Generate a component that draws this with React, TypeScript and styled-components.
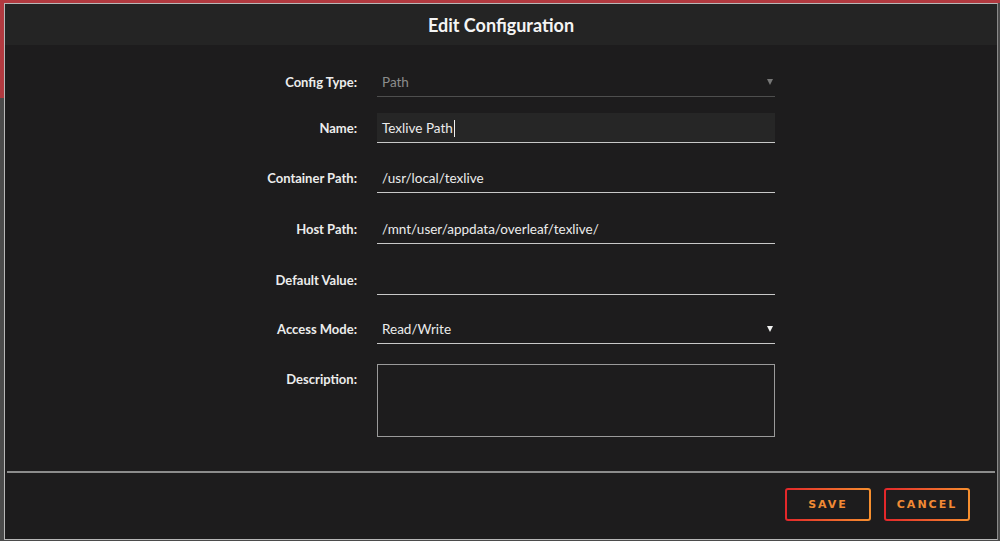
import React from 'react'
import styled, { createGlobalStyle } from 'styled-components'

const GlobalStyle = createGlobalStyle`
  html, body {
    margin: 0;
    padding: 0;
    height: 100%;
  }
  body {
    font-family: Lato, "Open Sans", sans-serif;
    background: #4b4b4b;
  }
  #root {
    height: 100%;
  }
`

type Field = {
  label: string
  kind: 'select' | 'input' | 'textarea'
  value?: string
  disabled?: boolean
  filled?: boolean
  caret?: boolean
  mt: number
}

const fields: Field[] = [
  { label: 'Config Type:', kind: 'select', value: 'Path', disabled: true, mt: 0 },
  { label: 'Name:', kind: 'input', value: 'Texlive Path', filled: true, caret: true, mt: 16 },
  { label: 'Container Path:', kind: 'input', value: '/usr/local/texlive', mt: 20 },
  { label: 'Host Path:', kind: 'input', value: '/mnt/user/appdata/overleaf/texlive/', mt: 21 },
  { label: 'Default Value:', kind: 'input', value: '', mt: 21 },
  { label: 'Access Mode:', kind: 'select', value: 'Read/Write', mt: 19 },
  { label: 'Description:', kind: 'textarea', mt: 20 },
]

export default function App() {
  return (
    <>
      <GlobalStyle />
      <Page>
        <Dialog>
          <Header>Edit Configuration</Header>
          <Body>
            {fields.map((f) => (
              <Row key={f.label} $mt={f.mt}>
                <Label>{f.label}</Label>
                {f.kind === 'textarea' ? (
                  <TextBox />
                ) : (
                  <Control $filled={f.filled} $disabled={f.disabled}>
                    <span>{f.value}</span>
                    {f.caret && <Caret />}
                    {f.kind === 'select' && <Arrow $disabled={f.disabled} />}
                  </Control>
                )}
              </Row>
            ))}
          </Body>
          <Divider />
          <Footer>
            <OutlineButton>SAVE</OutlineButton>
            <OutlineButton>CANCEL</OutlineButton>
          </Footer>
        </Dialog>
      </Page>
    </>
  )
}

const Page = styled.div`
  height: 100%;
  box-sizing: border-box;
  padding: 3px 2px 1px 4px;
  display: flex;
  background:
    linear-gradient(#b23a40, #b23a40) top left / 100% 3px no-repeat,
    linear-gradient(#b23a40, #b23a40) top left / 4px 98px no-repeat,
    #4b4b4b;
`

const Dialog = styled.div`
  flex: 1;
  display: flex;
  flex-direction: column;
  background: #1d1c1d;
  border: 1px solid #b8b8b8;
  border-right-color: #8a8a8a;
`

const Header = styled.div`
  height: 41px;
  display: flex;
  align-items: center;
  justify-content: center;
  background: #242424;
  color: #f4f4f4;
  font-size: 18px;
  font-weight: 700;
`

const Body = styled.div`
  flex: 1;
  padding-top: 22px;
  display: flex;
  flex-direction: column;
`

const Row = styled.div<{ $mt: number }>`
  display: grid;
  grid-template-columns: 352px 398px;
  column-gap: 20px;
  align-items: start;
  margin-top: ${(p) => p.$mt}px;
`

const Label = styled.div`
  text-align: right;
  line-height: 30px;
  height: 30px;
  font-size: 13px;
  font-weight: 700;
  color: #ececec;
`

const Control = styled.div<{ $filled?: boolean; $disabled?: boolean }>`
  position: relative;
  height: 30px;
  box-sizing: border-box;
  display: flex;
  align-items: center;
  padding: 1px 5px 0;
  font-size: 13.5px;
  color: ${(p) => (p.$disabled ? '#8c8c8c' : '#ececec')};
  background: ${(p) => (p.$filled ? '#262626' : 'transparent')};
  border-bottom: 1px solid ${(p) => (p.$disabled ? '#4e4e4e' : '#c8c8c8')};
`

const Caret = styled.span`
  width: 1px;
  height: 17px;
  margin-left: 1px;
  background: #f0f0f0;
`

const Arrow = styled.span<{ $disabled?: boolean }>`
  position: absolute;
  right: 2px;
  top: 12px;
  width: 0;
  height: 0;
  border-left: 3px solid transparent;
  border-right: 3px solid transparent;
  border-top: 6px solid ${(p) => (p.$disabled ? '#777' : '#f0f0f0')};
`

const TextBox = styled.div`
  height: 73px;
  box-sizing: border-box;
  border: 1px solid #9a9a9a;
`

const Divider = styled.div`
  height: 2px;
  margin: 0 2px;
  background: #8c8c8c;
`

const Footer = styled.div`
  display: flex;
  justify-content: flex-end;
  gap: 13px;
  padding: 15px 27px 18px 0;
`

const OutlineButton = styled.button`
  width: 86px;
  height: 33px;
  border: 2px solid transparent;
  border-radius: 3px;
  background:
    linear-gradient(#1d1c1d, #1d1c1d) padding-box,
    linear-gradient(90deg, #e3262a, #f7902f) border-box;
  color: #f28a34;
  font-family: "DejaVu Sans", sans-serif;
  font-size: 11px;
  font-weight: 700;
  letter-spacing: 2px;
  cursor: pointer;
`
